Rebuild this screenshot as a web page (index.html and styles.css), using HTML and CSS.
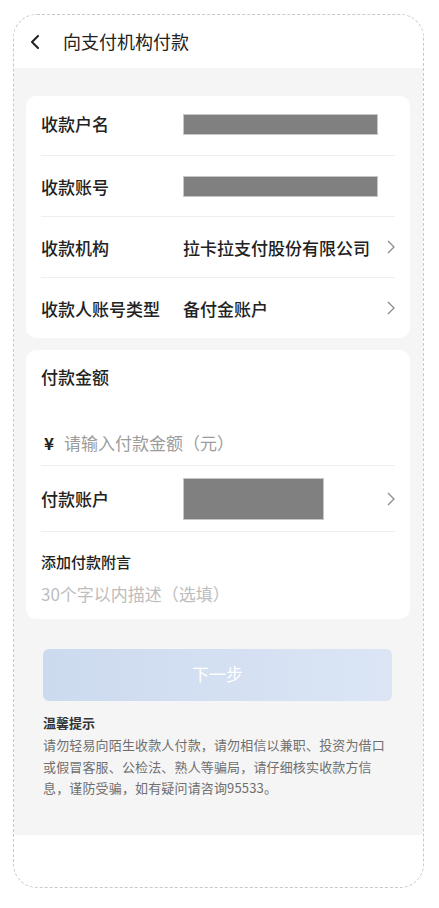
FILE: index.html
```html
<!DOCTYPE html>
<html lang="zh-CN">
<head>
<meta charset="utf-8">
<title>向支付机构付款</title>
<link rel="stylesheet" href="styles.css">
</head>
<body>
<div class="frame">
  <header class="topbar">
    <svg class="back" width="10" height="14" viewBox="0 0 10 14"><polyline points="8,1 2,7 8,13" fill="none" stroke="#222" stroke-width="2" stroke-linejoin="round" stroke-linecap="round"/></svg>
    <h1 class="title">向支付机构付款</h1>
  </header>
  <main class="content">
    <section class="card">
      <div class="row row-first">
        <span class="label">收款户名</span>
        <span class="mask mask-wide"></span>
      </div>
      <div class="row">
        <span class="label">收款账号</span>
        <span class="mask mask-wide"></span>
      </div>
      <div class="row">
        <span class="label">收款机构</span>
        <span class="value">拉卡拉支付股份有限公司</span>
        <svg class="chev" width="8" height="14" viewBox="0 0 8 14"><polyline points="1,1 7,7 1,13" fill="none" stroke="#8a8a8a" stroke-width="1.3"/></svg>
      </div>
      <div class="row">
        <span class="label">收款人账号类型</span>
        <span class="value">备付金账户</span>
        <svg class="chev" width="8" height="14" viewBox="0 0 8 14"><polyline points="1,1 7,7 1,13" fill="none" stroke="#8a8a8a" stroke-width="1.3"/></svg>
      </div>
    </section>

    <section class="card card-pay">
      <div class="pay-title">付款金额</div>
      <div class="amount-row">
        <span class="yen">¥</span>
        <span class="placeholder">请输入付款金额（元）</span>
      </div>
      <div class="row row-account">
        <span class="label">付款账户</span>
        <span class="mask mask-account"></span>
        <svg class="chev" width="8" height="14" viewBox="0 0 8 14"><polyline points="1,1 7,7 1,13" fill="none" stroke="#8a8a8a" stroke-width="1.3"/></svg>
      </div>
      <div class="note-title">添加付款附言</div>
      <div class="note-placeholder">30个字以内描述（选填）</div>
    </section>

    <button class="next" type="button">下一步</button>

    <div class="tips">
      <div class="tips-title">温馨提示</div>
      <p class="tips-text">请勿轻易向陌生收款人付款，请勿相信以兼职、投资为借口或假冒客服、公检法、熟人等骗局，请仔细核实收款方信息，谨防受骗，如有疑问请咨询95533。</p>
    </div>
  </main>
  <footer class="bottom"></footer>
</div>
</body>
</html>
```

FILE: styles.css
```css
* { box-sizing: border-box; }
html, body { margin: 0; padding: 0; background: #fff; }
body {
  font-family: "Noto Sans CJK SC", "Noto Sans", sans-serif;
  color: #222;
}
.frame {
  margin: 14px 0 0 13px;
  width: 411px;
  height: 874px;
  border: 1px dashed #c9c9c9;
  border-radius: 24px;
  overflow: hidden;
  display: flex;
  flex-direction: column;
  background: #fff;
}
.topbar {
  height: 53px;
  flex: none;
  display: flex;
  align-items: center;
  padding-left: 16px;
  padding-bottom: 2px;
  background: #fff;
}
.back { display: block; margin-top: 2px; }
.title {
  margin: 0 0 0 23px;
  font-size: 18px;
  font-weight: 400;
  color: #222;
  line-height: 24px;
}
.content {
  flex: 1;
  background: #f5f5f5;
  padding: 28px 13px 0 12px;
}
.card {
  background: #fff;
  border-radius: 10px;
  padding: 0 15px;
}
.row {
  height: 61px;
  display: flex;
  align-items: center;
  border-bottom: 1px solid #efefef;
}
.row-first { height: 60px; padding-bottom: 4px; }
.card > .row:last-child { border-bottom: none; height: 60px; }
.label {
  width: 142px;
  flex: none;
  font-size: 17px;
  font-weight: 500;
  color: #222;
}
.value {
  font-size: 17px;
  font-weight: 500;
  color: #222;
}
.chev { margin-left: auto; display: block; }
.mask {
  display: block;
  background: #808080;
  border: 1px solid #c6c6c6;
}
.mask-wide { width: 195px; height: 21px; }
.row-first .mask-wide { margin-top: 2px; }
.mask-account { width: 141px; height: 42px; }

.card-pay { margin-top: 12px; padding-top: 17px; padding-bottom: 13px; }
.pay-title {
  font-size: 17px;
  font-weight: 500;
  line-height: 20px;
}
.amount-row {
  margin-top: 37px;
  height: 42px;
  display: flex;
  align-items: center;
  border-bottom: 1px solid #efefef;
  padding-bottom: 4px;
}
.yen {
  font-size: 17px;
  font-weight: 700;
  color: #222;
  margin-left: 3px;
  width: 20px;
}
.placeholder {
  font-size: 17px;
  color: #9c9c9c;
}
.row-account { height: 66px; }
.note-title {
  margin-top: 20px;
  font-size: 15px;
  font-weight: 500;
  line-height: 20px;
}
.note-placeholder {
  margin-top: 10px;
  font-size: 17px;
  line-height: 24px;
  color: #bdbdbd;
}
.next {
  display: block;
  margin: 30px 17px 0 17px;
  width: 349px;
  height: 52px;
  border: none;
  border-radius: 6px;
  background: linear-gradient(90deg, #ccdaef 0%, #dbe5f5 100%);
  color: #fff;
  font-family: inherit;
  font-size: 17px;
  padding-bottom: 4px;
}
.tips { margin: 12px 17px 0 17px; }
.tips-title {
  font-size: 13px;
  font-weight: 700;
  color: #333;
  line-height: 20px;
}
.tips-text {
  margin: 1px 0 0 0;
  font-size: 13px;
  letter-spacing: 0.15px;
  line-height: 21.5px;
  color: #6f6f6f;
}
.bottom { height: 52px; flex: none; background: #fff; }
```
